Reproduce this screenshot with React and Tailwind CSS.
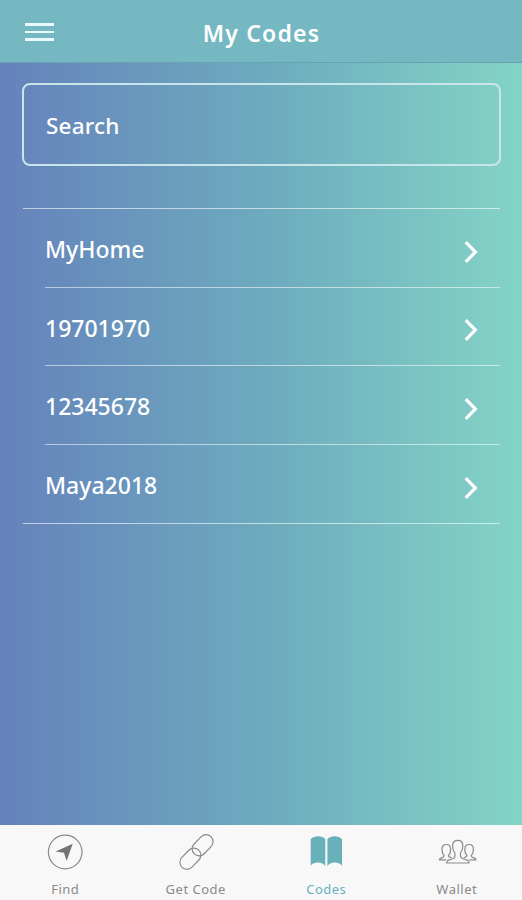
import clsx from 'clsx'

const codes = ['MyHome', '19701970', '12345678', 'Maya2018']

function FindIcon() {
  return (
    <svg viewBox="0 0 44 36" className="w-11 h-9" fill="none">
      <circle cx="22.2" cy="18" r="16.8" stroke="currentColor" strokeWidth="1.2" />
      <path d="M29.7 9.8 12.6 17.4l8.4 1.4 2.6 8.2z" fill="#747474" />
    </svg>
  )
}

function LinkIcon() {
  return (
    <svg viewBox="0 0 44 36" className="w-11 h-9" fill="none" stroke="currentColor" strokeWidth="1.2">
      <rect x="16.6" y="4.3" width="24" height="14" rx="7" transform="rotate(-46 28.6 11.3)" />
      <rect x="4.4" y="17.7" width="24" height="14" rx="7" transform="rotate(-46 16.4 24.7)" />
    </svg>
  )
}

function BookIcon() {
  return (
    <svg viewBox="0 0 44 36" className="w-11 h-9" fill="currentColor">
      <path d="M6.7 5.2C8.6 3 11.2 2.2 14 2.2s5.5.8 7.3 3v26.9c-1.7-2.2-4-3.6-7.300-3.600s-5.600 1.100-7.300 3.200z" />
      <path d="M38 5.200c-1.900-2.200-4.500-3-7.300-3s-5.500.8-7.300 3v26.900c1.700-2.200 4-3.600 7.300-3.600s5.600 1.100 7.300 3.200z" />
    </svg>
  )
}

function PeopleIcon() {
  return (
    <svg viewBox="0 0 44 36" className="w-11 h-9" fill="none" stroke="currentColor" strokeWidth="1.2" strokeLinejoin="round">
      <path d="M19.900 18.800c-1.700-1.800-2.300-4.300-2.300-7.100 0-3.600 1.800-5.300 5.100-5.300s5.100 1.700 5.100 5.300c0 2.800-.6 5.300-2.300 7.100v3.400c0 1.500 1 2 2.600 2.500l4.200 1.400c1.200.4 1.800 1.200 1.800 2.900H11.700c0-1.700.6-2.500 1.800-2.900l4.100-1.400c1.600-.5 2.300-1 2.300-2.500z" />
      <path d="M16.500 23.600c-2.100-.4-3.100-.9-3.100-2.200 1.500-1.200 2.200-3.300 2.200-6.100s-1.500-4.800-4.300-4.800S7 12.500 7 15.300s.7 4.900 2.200 6.100c0 1.300-.7 1.700-2.200 2.300-1.700.5-2.500 1-2.600 2.100h6.800" />
      <path d="M28.900 23.600c2.100-.4 3.100-.9 3.100-2.200-1.500-1.200-2.200-3.300-2.200-6.100s1.500-4.800 4.300-4.800 4.300 2 4.300 4.800-.7 4.900-2.200 6.100c0 1.300.7 1.700 2.200 2.300 1.700.5 2.500 1 2.600 2.100h-6.800" />
    </svg>
  )
}

const tabs = [
  { label: 'Find', icon: FindIcon },
  { label: 'Get Code', icon: LinkIcon },
  { label: 'Codes', icon: BookIcon, active: true },
  { label: 'Wallet', icon: PeopleIcon },
]

export default function App() {
  return (
    <div className="h-screen flex flex-col overflow-hidden text-white font-['Noto_Sans',sans-serif] bg-linear-to-r from-[#6582bb] via-[#6eacbe] via-53% to-[#84d4c6]">

      {/* Title bar */}
      <header className="h-[63px] shrink-0 grid grid-cols-[1fr_auto_1fr] items-center bg-[#75b8c1] border-b border-[#67a3b0]">
        <button aria-label="Menu" className="ml-[25px] mt-[2px] w-[29px] flex flex-col gap-[5px]">
          <span className="h-[2.5px] bg-[#e8fbfb]" />
          <span className="h-[2.5px] bg-[#e8fbfb]" />
          <span className="h-[2.5px] bg-[#e8fbfb]" />
        </button>
        <h1 className="pt-[3px] pl-px text-[23px] leading-8 font-semibold tracking-[1.2px]">My Codes</h1>
      </header>

      <main className="flex-1 pl-[22px] pr-[21px] pt-5">
        <div className="h-[83px] flex items-center rounded-lg border-2 border-[#c9e5ec] pt-[2px] pl-[22px] text-[22.5px] tracking-[0.2px] font-medium">
          Search
        </div>

        {/* Saved codes */}
        <ul className="mt-[42px] ml-px mr-px border-y-[1.5px] border-white/60">
          {codes.map((code, i) => (
            <li
              key={code}
              className={clsx(
                'ml-[22px] h-[78.5px] flex items-center justify-between pr-[22px] pt-[4px] text-[23px] font-medium',
                i < codes.length - 1 && 'border-b-[1.5px] border-white/55',
              )}
            >
              <span className="-mt-px">{code}</span>
              <svg viewBox="0 0 14 22" className="w-3.5 h-[22px] mt-1" fill="none" stroke="white" strokeWidth="3.2">
                <path d="M1.700 1.200 11.400 11 1.700 20.800" />
              </svg>
            </li>
          ))}
        </ul>
      </main>

      {/* Tab bar */}
      <nav className="h-[75px] shrink-0 grid grid-cols-4 bg-[#f8f8f8] text-[#8a8a8a]">
        {tabs.map(({ label, icon: Icon, active }) => (
          <button
            key={label}
            className={clsx('flex flex-col items-center pt-[9px]', active && 'text-[#68b1bb]')}
          >
            <Icon />
            <span className="mt-[11px] text-[13px] leading-4 tracking-[0.5px]">{label}</span>
          </button>
        ))}
      </nav>
    </div>
  )
}
